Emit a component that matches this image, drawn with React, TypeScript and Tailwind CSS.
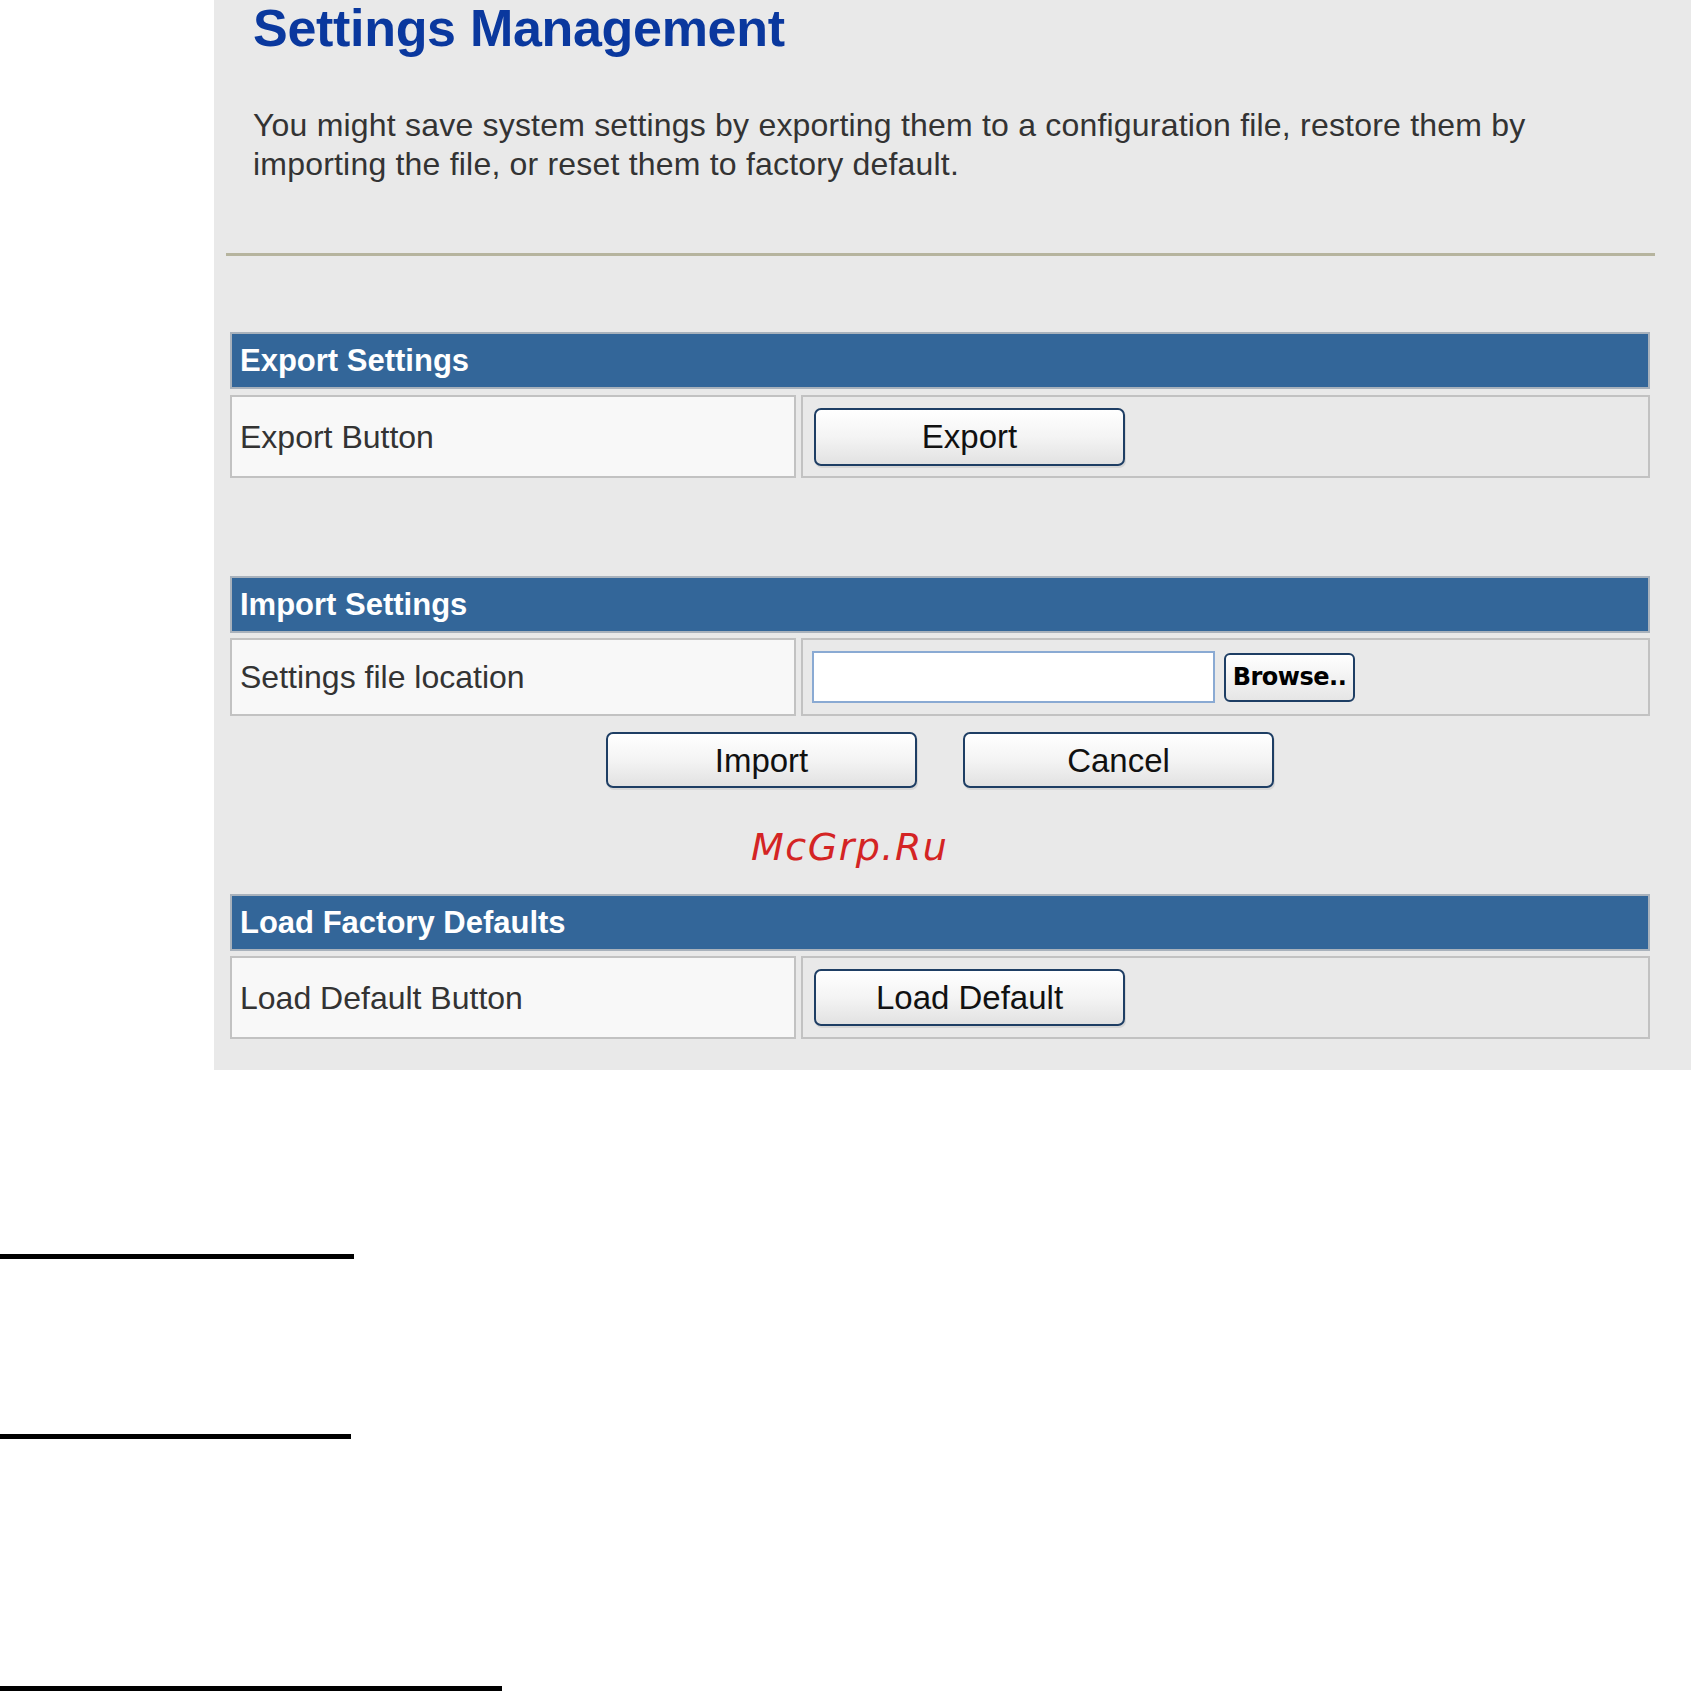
import React from 'react';

const sans = "font-['Liberation_Sans',Arial,sans-serif]";

function Btn({ label, w = 'w-[311px]', h = 'h-[58px]' }: { label: string; w?: string; h?: string }) {
  return (
    <button
      className={`${w} ${h} ${sans} rounded-[7px] border-2 border-[#1e3e64] bg-linear-to-b from-white via-[#f4f4f4] to-[#e2e2e2] text-[33px] leading-none text-[#111] shadow-[1px_2px_0_#d6d6d6]`}
    >
      {label}
    </button>
  );
}

function SectionHeader({ title }: { title: string }) {
  return (
    <div className="h-[57px] border-2 border-[#a9b2bc] bg-[#336699] flex items-center pl-[8px]">
      <span className={`${sans} text-[31px] font-bold text-white leading-none`}>{title}</span>
    </div>
  );
}

function Row({ label, h, children }: { label: string; h: string; children: React.ReactNode }) {
  return (
    <div className={`flex gap-[5px] ${h}`}>
      <div className="w-[566px] border-2 border-[#c2c2c2] bg-[#f8f8f8] flex items-center pl-[8px]">
        <span className={`${sans} text-[32px] leading-none text-[#333]`}>{label}</span>
      </div>
      <div className="flex-1 border-2 border-[#c2c2c2] bg-[#e9e9e9] flex items-center">{children}</div>
    </div>
  );
}

export default function App() {
  return (
    <div className="w-[1691px] h-[1691px] overflow-hidden bg-white flex flex-col">
      <div className="ml-[214px] w-[1477px] h-[1070px] shrink-0 bg-[#e9e9e9] flex flex-col">
        <h1 className={`${sans} ml-[39px] mt-[2px] text-[52px] leading-none font-bold tracking-[-0.3px] text-[#0a389e]`}>
          Settings Management
        </h1>
        <p className={`${sans} ml-[39px] mt-[52px] text-[32px] leading-[39px] tracking-[0.2px] text-[#333]`}>
          You might save system settings by exporting them to a configuration file, restore them by
          <br />
          importing the file, or reset them to factory default.
        </p>
        <div className="ml-[12px] mt-[69px] w-[1429px] h-[3px] bg-[#b6b49e]" />

        <div className="ml-[16px] w-[1420px] flex flex-col">
          <div className="mt-[76px]">
            <SectionHeader title="Export Settings" />
          </div>
          <div className="mt-[6px]">
            <Row label="Export Button" h="h-[83px]">
              <div className="pl-[11px]">
                <Btn label="Export" />
              </div>
            </Row>
          </div>

          <div className="mt-[98px]">
            <SectionHeader title="Import Settings" />
          </div>
          <div className="mt-[5px]">
            <Row label="Settings file location" h="h-[78px]">
              <div className="pl-[9px] flex items-center gap-[9px]">
                <div className="w-[403px] h-[52px] border-2 border-[#8aaad3] bg-white" />
                <button className="w-[131px] h-[49px] rounded-[6px] border-2 border-[#1e3e64] bg-linear-to-b from-white to-[#e6e6e6] font-['DejaVu_Sans',Verdana,sans-serif] font-bold text-[24px] tracking-[-0.5px] leading-none text-black">
                  Browse..
                </button>
              </div>
            </Row>
          </div>
          <div className="mt-[16px] flex justify-center gap-[46px]">
            <Btn label="Import" h="h-[56px]" />
            <Btn label="Cancel" h="h-[56px]" />
          </div>

          <div className="mt-[40px] ml-[521px] h-[38px] font-['DejaVu_Sans',Verdana,sans-serif] italic text-[38px] leading-none tracking-[1.5px] text-[#d42424]">
            McGrp.Ru
          </div>

          <div className="mt-[28px]">
            <SectionHeader title="Load Factory Defaults" />
          </div>
          <div className="mt-[5px]">
            <Row label="Load Default Button" h="h-[83px]">
              <div className="pl-[11px]">
                <Btn label="Load Default" h="h-[57px]" />
              </div>
            </Row>
          </div>
        </div>
      </div>

      <div className="mt-[184px] w-[354px] h-[5px] bg-black shrink-0" />
      <div className="mt-[175px] w-[351px] h-[5px] bg-black shrink-0" />
      <div className="mt-[247px] w-[502px] h-[5px] bg-black shrink-0" />
    </div>
  );
}
